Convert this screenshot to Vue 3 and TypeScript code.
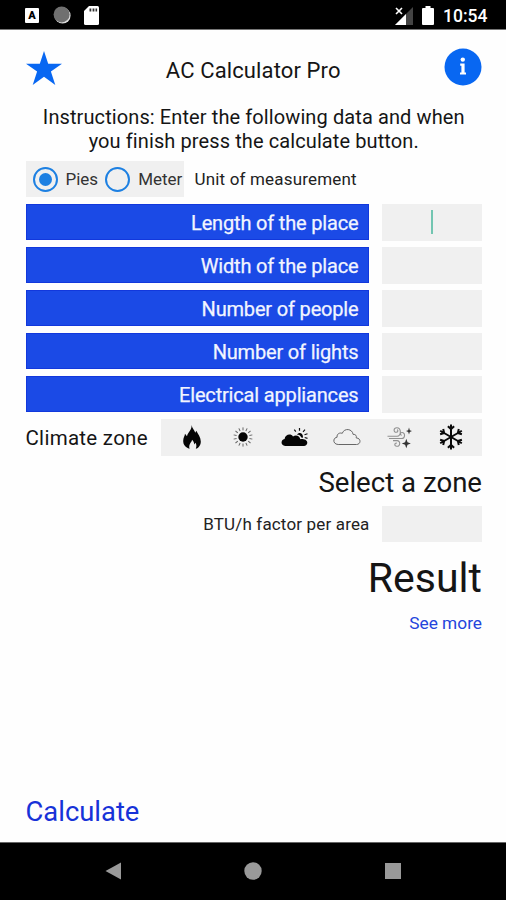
<script setup lang="ts">
import { ref } from 'vue'

interface Field {
  label: string
  focused: boolean
}

const unit = ref<'pies' | 'meter'>('pies')

const fields: Field[] = [
  { label: 'Length of the place', focused: true },
  { label: 'Width of the place', focused: false },
  { label: 'Number of people', focused: false },
  { label: 'Number of lights', focused: false },
  { label: 'Electrical appliances', focused: false },
]

const sunRays: number[] = Array.from({ length: 14 }, (_, i) => (i * 360) / 14)
const flakeArms: number[] = [0, 60, 120, 180, 240, 300]
</script>

<template>
  <div class="screen">
    <header class="status">
      <div class="status-left">
        <span class="app-badge">A</span>
        <svg class="sync" viewBox="0 0 18 18">
          <circle cx="9.6" cy="9.6" r="8" fill="#ddd" />
          <circle cx="8.6" cy="8.4" r="8" fill="#707070" />
        </svg>
        <svg class="sd" viewBox="0 0 15 19">
          <path d="M5 0H13.5Q15 0 15 1.5V17.5Q15 19 13.5 19H1.5Q0 19 0 17.5V5Z" fill="#fff" />
          <path d="M5.5 2.5h1.8v3H5.5zM8.6 2.5h1.8v3H8.6zM11.5 2.5h1.6v3h-1.6z" fill="#333" />
        </svg>
      </div>
      <div class="status-right">
        <svg class="signal" viewBox="0 0 18 18">
          <path d="M18 0V18H0Z" fill="#444" />
          <path d="M11 7V18H0Z" fill="#fff" />
          <path d="M0 0H8V9H0Z" fill="#000" />
          <path d="M1 1L7 7M7 1L1 7" stroke="#fff" stroke-width="1.6" />
        </svg>
        <svg class="battery" viewBox="0 0 12 19">
          <path d="M3.5 0h5v2H11q1 0 1 1V18q0 1-1 1H1q-1 0-1-1V3q0-1 1-1H3.5Z" fill="#fff" />
        </svg>
        <span class="clock">10:54</span>
      </div>
    </header>

    <main class="content">
      <div class="titlebar">
        <svg class="star" viewBox="0 0 36 34">
          <path d="M18 0L22.2 12.7H36L24.9 20.5L29.3 34L18 25.7L6.7 34L11.1 20.5L0 12.7H13.8Z" fill="#0867f2" />
        </svg>
        <h1 class="title">AC Calculator Pro</h1>
        <svg class="info" viewBox="0 0 38 38">
          <circle cx="19" cy="19" r="18.5" fill="#0867f2" />
          <circle cx="18.8" cy="11.6" r="2.2" fill="#fff" />
          <path d="M16.2 15.5H20.6V24.4H22V26.6H16V24.4H17.4V17.7H16.2Z" fill="#fff" />
        </svg>
      </div>

      <p class="instructions">
        <span class="line">Instructions: Enter the following data and when</span>
        <span class="line second">you finish press the calculate button.</span>
      </p>

      <div class="units">
        <div class="radios">
          <button class="radio" @click="unit = 'pies'">
            <span class="ring"><i v-if="unit === 'pies'" class="dot" /></span>
            <span class="small">Pies</span>
          </button>
          <button class="radio meter" @click="unit = 'meter'">
            <span class="ring"><i v-if="unit === 'meter'" class="dot" /></span>
            <span class="small">Meter</span>
          </button>
        </div>
        <span class="unit-label">Unit of measurement</span>
      </div>

      <div class="fields">
        <div v-for="field in fields" :key="field.label" class="field">
          <div class="bar">{{ field.label }}</div>
          <div class="entry"><i v-if="field.focused" class="caret" /></div>
        </div>
      </div>

      <div class="climate">
        <span class="climate-label">Climate zone</span>
        <div class="zones">
          <svg class="zone" viewBox="0 0 30 30">
            <path d="M14.6 3C15.2 6.5 17.2 7.6 18.3 10.8L19.3 8.8C21 12 23.8 15.3 23.8 19.5C23.8 23.5 21.5 26 18.8 26.8C20 24 19.2 21.7 18.5 20.7L17.3 22.5C17 19.8 16 18.7 15 17.7C15.2 20 11 22 12.6 26.8C8.5 25.5 6.2 22.8 6.2 19C6.2 16 7.8 14 8 11.8L10 14.3C10.8 10 15 8 14.6 3Z" />
          </svg>
          <svg class="zone sun" viewBox="0 0 30 30">
            <circle cx="15" cy="15" r="4.7" />
            <path v-for="a in sunRays" :key="a" d="M15 8.4V5.4" :transform="`rotate(${a} 15 15)`" stroke="#666" stroke-width="1" />
          </svg>
          <svg class="zone" viewBox="0 0 30 30">
            <path d="M5.2 24C.5 23.8.4 17.8 4.6 17.1C5 12.2 11 11.3 13 14.4C16.2 12.2 19.8 14.2 20.3 17.2C23.3 16.8 27.3 17.8 27.3 20.8C27.3 22.8 25.7 24 24 24Z" />
            <path d="M16.8 12.5C19.2 9.4 23.5 11 23 15.8L21.3 15.5C20.5 13.5 19 12.8 16.8 12.5Z" />
            <path d="M15.8 9.7L14.3 7.7M19.5 8.7V6M23 9.8L25 7.7M24.5 12.7L27.5 11.7M24.7 15.5L27.5 16.3" stroke="#111" stroke-width="1.2" />
          </svg>
          <svg class="zone" viewBox="0 0 30 30">
            <path d="M6.2 22.5C.5 22.3.7 15.7 5.1 15.2C4.5 12 7.8 10.2 10.2 11.4C12.3 5.5 20.5 6.8 21.1 12.4C23.8 12.1 24.8 14 24.2 15.9C29.4 16.1 29 22.5 24.5 22.5Z" fill="none" stroke="#666" stroke-width="1" />
          </svg>
          <svg class="zone" viewBox="0 0 30 30">
            <path d="M3.5 14.3H13C17.5 14.3 17.5 5.7 12.8 5.7C9.3 5.7 9.3 10.3 12.2 10.3C14.2 10.3 14.3 8 13 7.8M5 16.5H17.5C21.5 16.5 21.5 10.2 17.8 10.5C15.8 10.8 16 13.2 17.8 13.2M9 18.6H13C16.8 18.6 16.5 24.6 12.8 24.3C9.9 24 10.5 20.5 12.8 21.2" fill="none" stroke="#909090" stroke-width="1.1" />
            <path d="M25 5.5L25.8 8.2L28 9.1L25.8 10L25 12.5L24.2 10L22 9.1L24.2 8.2ZM22.3 16.8L23.5 20.3L26.8 21.5L23.5 22.8L22.3 26.3L21.1 22.8L17.8 21.5L21.1 20.3Z" fill="#333" />
          </svg>
          <svg class="zone" viewBox="0 0 30 30">
            <path v-for="a in flakeArms" :key="a" d="M15 15V2.5M11.9 4.2L15 7.1L18.1 4.2" :transform="`rotate(${a} 15 15)`" fill="none" stroke="#0a0a0a" stroke-width="2" />
          </svg>
        </div>
      </div>

      <div class="select-zone">Select a zone</div>

      <div class="factor">
        <span class="factor-label">BTU/h factor per area</span>
        <div class="entry" />
      </div>

      <div class="result">Result</div>
      <div class="more"><a>See more</a></div>
      <div class="calc"><a>Calculate</a></div>
    </main>

    <nav class="nav">
      <svg viewBox="0 0 18 18"><path d="M1.5 9L17 .5V17.5Z" /></svg>
      <svg viewBox="0 0 18 18"><circle cx="9" cy="9" r="8.7" /></svg>
      <svg viewBox="0 0 18 18"><rect x="1" y="1" width="16" height="16" /></svg>
    </nav>
  </div>
</template>

<style>
body { margin: 0; background: #fff; }
</style>

<style scoped>
* { box-sizing: border-box; }
.screen {
  width: 506px;
  height: 900px;
  display: flex;
  flex-direction: column;
  background: #fefefe;
  color: #151515;
  font-family: Roboto, "Liberation Sans", sans-serif;
  white-space: nowrap;
  overflow: hidden;
}
svg { display: block; flex: none; }
.status {
  height: 30px;
  flex: none;
  display: flex;
  justify-content: space-between;
  padding: 0 18.5px 0 25px;
  background: #000;
  border-bottom: 1px solid #777;
}
.status-left, .status-right { display: flex; align-items: center; }
.app-badge {
  width: 14px;
  height: 15px;
  margin-top: 1px;
  border-radius: 1px;
  background: #fff;
  color: #000;
  font-size: 11px;
  font-weight: 900;
  line-height: 15px;
  text-align: center;
}
.sync { width: 18px; height: 18px; margin-left: 14px; }
.sd { width: 15px; height: 19px; margin: 1px 0 0 13px; }
.signal { width: 18px; height: 18px; margin-top: 2px; }
.battery { width: 12px; height: 19px; margin: 1px 0 0 9px; }
.clock {
  margin: 3px 0 0 9px;
  color: #fff;
  font-size: 17.5px;
  font-weight: 500;
}
.content {
  flex: 1;
  display: flex;
  flex-direction: column;
  padding: 0 24px 0 25.5px;
}
.titlebar {
  height: 75px;
  display: flex;
  align-items: center;
  justify-content: space-between;
}
.star { width: 36px; height: 34px; }
.title {
  margin: 7px 0 0 1px;
  font-size: 22px;
  font-weight: 400;
  line-height: 26px;
  letter-spacing: .12px;
}
.info { width: 38px; height: 38px; }
.titlebar .info { margin-top: -1px; }
.instructions {
  height: 55.5px;
  margin: 0;
  display: flex;
  flex-direction: column;
  align-items: center;
  font-size: 20px;
  line-height: 24px;
  letter-spacing: .1px;
}
.units { height: 36.5px; display: flex; align-items: center; flex: none; }
.radios {
  width: 158px;
  height: 100%;
  display: flex;
  align-items: center;
  padding-left: 7px;
  background: #f0f0f0;
}
.radio {
  display: flex;
  align-items: center;
  gap: 8px;
  padding: 0;
  border: 0;
  background: none;
  color: #333;
  font: inherit;
  font-size: 17px;
}
.meter { margin-left: 7px; }
.ring {
  width: 25px;
  height: 25px;
  margin-top: 1px;
  display: flex;
  align-items: center;
  justify-content: center;
  border: 2.5px solid #1d80e2;
  border-radius: 50%;
}
.dot { width: 13px; height: 13px; border-radius: 50%; background: #1d80e2; }
.unit-label { margin-left: 11px; padding-top: 1px; color: #222; font-size: 17px; letter-spacing: .17px; }
.fields { margin-top: 7px; display: flex; flex-direction: column; gap: 7px; }
.field { height: 36px; display: flex; gap: 13px; }
.bar {
  width: 343px;
  display: flex;
  align-items: center;
  justify-content: flex-end;
  padding: 1px 9px 0 0;
  border: 1px solid #1238dc;
  background: #1b4ae6;
  color: #f2f5ff;
  font-size: 20px;
  letter-spacing: -.17px;
  -webkit-text-stroke: .25px #f2f5ff;
}
.entry {
  width: 100.5px;
  height: 36.5px;
  display: flex;
  align-items: center;
  justify-content: center;
  background: #f0f0f0;
}
.caret { width: 2px; height: 24px; background: #72c5b1; }
.climate { height: 36.5px; margin-top: 7px; display: flex; align-items: center; justify-content: space-between; }
.climate-label { padding-top: 2px; font-size: 20.5px; letter-spacing: .28px; }
.zones {
  width: 321px;
  height: 100%;
  display: flex;
  align-items: center;
  justify-content: space-between;
  padding: 0 16px;
  background: #f0f0f0;
}
.zone { width: 30px; height: 30px; fill: #050505; }
.sun { margin-left: -1px; }
.select-zone { height: 50px; text-align: right; font-size: 27.6px; line-height: 54px; }
.factor { height: 36.5px; display: flex; align-items: center; justify-content: flex-end; gap: 12px; }
.factor-label { padding-top: 1px; font-size: 17px; letter-spacing: .16px; color: #222; }
.result { height: 66px; text-align: right; font-size: 41px; line-height: 72px; }
.more { height: 28px; text-align: right; color: #2445dc; font-size: 17.3px; line-height: 30px; }
.calc { margin-top: auto; height: 46px; color: #1732d8; font-size: 27.4px; line-height: 33px; }
.nav {
  height: 58px;
  flex: none;
  display: flex;
  justify-content: space-between;
  align-items: center;
  padding: 0 104px 1px;
  background: #000;
  border-top: 1px solid #666;
  fill: #999;
}
.nav svg { width: 18px; height: 18px; }
</style>
